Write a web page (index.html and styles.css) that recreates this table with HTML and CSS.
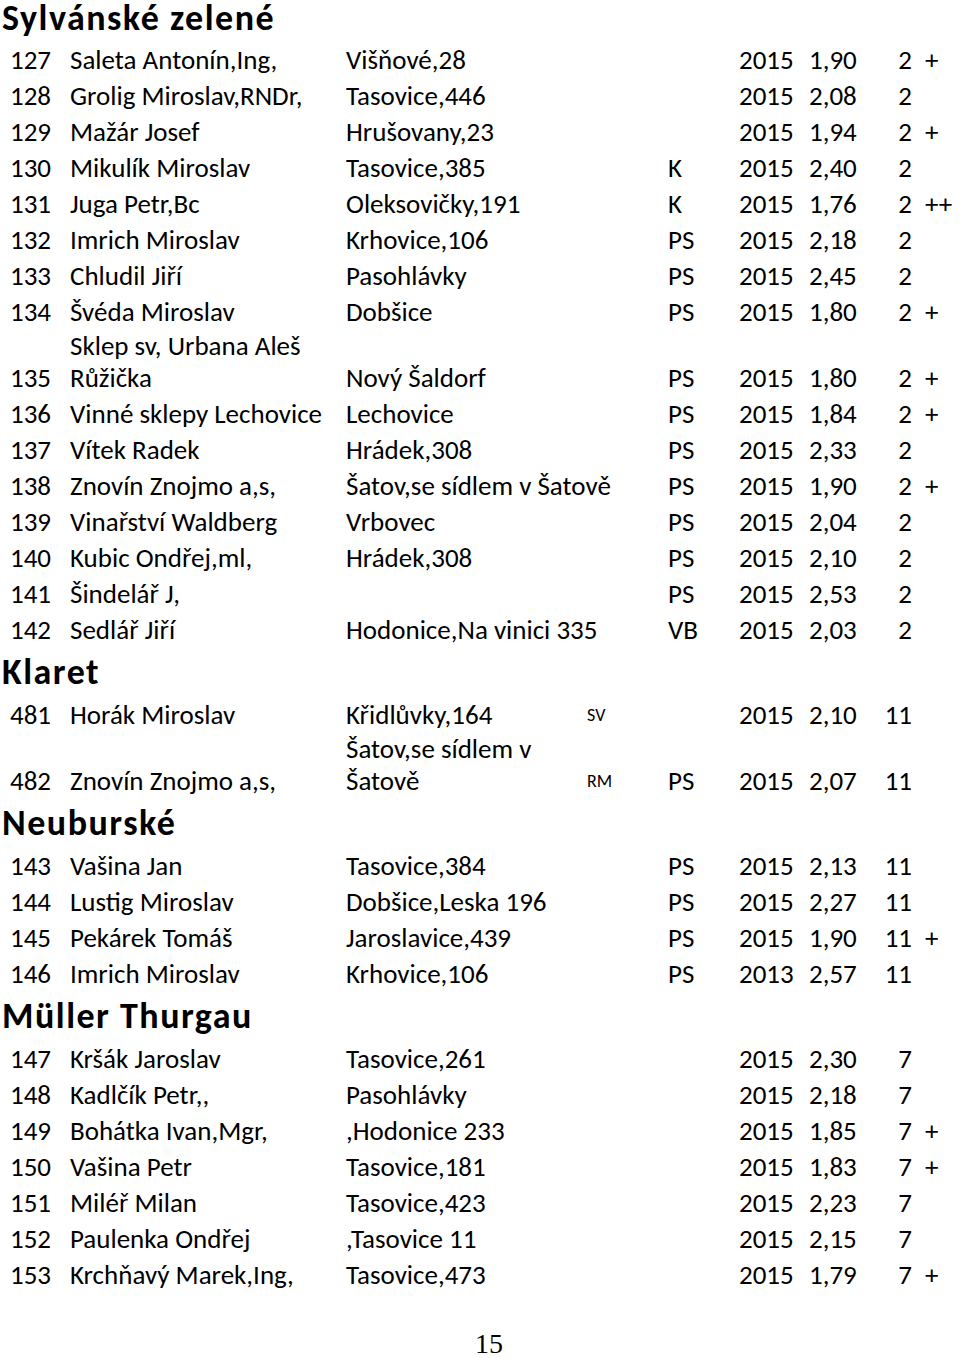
FILE: index.html
```html
<!DOCTYPE html>
<html lang="cs">
<head>
<meta charset="utf-8">
<title>Sylvánské zelené</title>
<link rel="stylesheet" href="styles.css">
</head>
<body>
<div class="page">
  <h2 class="sec first">Sylvánské zelené</h2>
  <div class="row"><span class="n">127</span><span>Saleta Antonín,Ing,</span><span>Višňové,28</span><span></span><span></span><span>2015</span><span>1,90</span><span class="c">2</span><span class="p">+</span></div>
  <div class="row"><span class="n">128</span><span>Grolig Miroslav,RNDr,</span><span>Tasovice,446</span><span></span><span></span><span>2015</span><span>2,08</span><span class="c">2</span><span class="p"></span></div>
  <div class="row"><span class="n">129</span><span>Mažár Josef</span><span>Hrušovany,23</span><span></span><span></span><span>2015</span><span>1,94</span><span class="c">2</span><span class="p">+</span></div>
  <div class="row"><span class="n">130</span><span>Mikulík Miroslav</span><span>Tasovice,385</span><span></span><span>K</span><span>2015</span><span>2,40</span><span class="c">2</span><span class="p"></span></div>
  <div class="row"><span class="n">131</span><span>Juga Petr,Bc</span><span>Oleksovičky,191</span><span></span><span>K</span><span>2015</span><span>1,76</span><span class="c">2</span><span class="p">++</span></div>
  <div class="row"><span class="n">132</span><span>Imrich Miroslav</span><span>Krhovice,106</span><span></span><span>PS</span><span>2015</span><span>2,18</span><span class="c">2</span><span class="p"></span></div>
  <div class="row"><span class="n">133</span><span>Chludil Jiří</span><span>Pasohlávky</span><span></span><span>PS</span><span>2015</span><span>2,45</span><span class="c">2</span><span class="p"></span></div>
  <div class="row"><span class="n">134</span><span>Švéda Miroslav</span><span>Dobšice</span><span></span><span>PS</span><span>2015</span><span>1,80</span><span class="c">2</span><span class="p">+</span></div>
  <div class="row"><span class="n">135</span><span>Sklep sv, Urbana Aleš<br>Růžička</span><span>Nový Šaldorf</span><span></span><span>PS</span><span>2015</span><span>1,80</span><span class="c">2</span><span class="p">+</span></div>
  <div class="row"><span class="n">136</span><span>Vinné sklepy Lechovice</span><span>Lechovice</span><span></span><span>PS</span><span>2015</span><span>1,84</span><span class="c">2</span><span class="p">+</span></div>
  <div class="row"><span class="n">137</span><span>Vítek Radek</span><span>Hrádek,308</span><span></span><span>PS</span><span>2015</span><span>2,33</span><span class="c">2</span><span class="p"></span></div>
  <div class="row"><span class="n">138</span><span>Znovín Znojmo a,s,</span><span>Šatov,se sídlem v Šatově</span><span></span><span>PS</span><span>2015</span><span>1,90</span><span class="c">2</span><span class="p">+</span></div>
  <div class="row"><span class="n">139</span><span>Vinařství Waldberg</span><span>Vrbovec</span><span></span><span>PS</span><span>2015</span><span>2,04</span><span class="c">2</span><span class="p"></span></div>
  <div class="row"><span class="n">140</span><span>Kubic Ondřej,ml,</span><span>Hrádek,308</span><span></span><span>PS</span><span>2015</span><span>2,10</span><span class="c">2</span><span class="p"></span></div>
  <div class="row"><span class="n">141</span><span>Šindelář J,</span><span></span><span></span><span>PS</span><span>2015</span><span>2,53</span><span class="c">2</span><span class="p"></span></div>
  <div class="row"><span class="n">142</span><span>Sedlář Jiří</span><span>Hodonice,Na vinici 335</span><span></span><span>VB</span><span>2015</span><span>2,03</span><span class="c">2</span><span class="p"></span></div>

  <h2 class="sec">Klaret</h2>
  <div class="row"><span class="n">481</span><span>Horák Miroslav</span><span>Křidlůvky,164</span><span class="s">SV</span><span></span><span>2015</span><span>2,10</span><span class="c">11</span><span class="p"></span></div>
  <div class="row"><span class="n">482</span><span>Znovín Znojmo a,s,</span><span>Šatov,se sídlem v<br>Šatově</span><span class="s">RM</span><span>PS</span><span>2015</span><span>2,07</span><span class="c">11</span><span class="p"></span></div>

  <h2 class="sec">Neuburské</h2>
  <div class="row"><span class="n">143</span><span>Vašina Jan</span><span>Tasovice,384</span><span></span><span>PS</span><span>2015</span><span>2,13</span><span class="c">11</span><span class="p"></span></div>
  <div class="row"><span class="n">144</span><span>Lustig Miroslav</span><span>Dobšice,Leska 196</span><span></span><span>PS</span><span>2015</span><span>2,27</span><span class="c">11</span><span class="p"></span></div>
  <div class="row"><span class="n">145</span><span>Pekárek Tomáš</span><span>Jaroslavice,439</span><span></span><span>PS</span><span>2015</span><span>1,90</span><span class="c">11</span><span class="p">+</span></div>
  <div class="row"><span class="n">146</span><span>Imrich Miroslav</span><span>Krhovice,106</span><span></span><span>PS</span><span>2013</span><span>2,57</span><span class="c">11</span><span class="p"></span></div>

  <h2 class="sec">Müller Thurgau</h2>
  <div class="row"><span class="n">147</span><span>Kršák Jaroslav</span><span>Tasovice,261</span><span></span><span></span><span>2015</span><span>2,30</span><span class="c">7</span><span class="p"></span></div>
  <div class="row"><span class="n">148</span><span>Kadlčík Petr,,</span><span>Pasohlávky</span><span></span><span></span><span>2015</span><span>2,18</span><span class="c">7</span><span class="p"></span></div>
  <div class="row"><span class="n">149</span><span>Bohátka Ivan,Mgr,</span><span>,Hodonice 233</span><span></span><span></span><span>2015</span><span>1,85</span><span class="c">7</span><span class="p">+</span></div>
  <div class="row"><span class="n">150</span><span>Vašina Petr</span><span>Tasovice,181</span><span></span><span></span><span>2015</span><span>1,83</span><span class="c">7</span><span class="p">+</span></div>
  <div class="row"><span class="n">151</span><span>Miléř Milan</span><span>Tasovice,423</span><span></span><span></span><span>2015</span><span>2,23</span><span class="c">7</span><span class="p"></span></div>
  <div class="row"><span class="n">152</span><span>Paulenka Ondřej</span><span>,Tasovice 11</span><span></span><span></span><span>2015</span><span>2,15</span><span class="c">7</span><span class="p"></span></div>
  <div class="row"><span class="n">153</span><span>Krchňavý Marek,Ing,</span><span>Tasovice,473</span><span></span><span></span><span>2015</span><span>1,79</span><span class="c">7</span><span class="p">+</span></div>

  <div class="footer">15</div>
</div>
</body>
</html>
```

FILE: styles.css
```css
html, body {
  margin: 0;
  padding: 0;
  background: #fff;
}
.page {
  width: 960px;
  color: #000;
  font-family: Carlito, Calibri, Lato, "Liberation Sans", sans-serif;
  font-size: 27px;
}
.sec {
  margin: 0;
  height: 49px;
  padding-left: 2px;
  font-size: 36px;
  font-weight: bold;
  letter-spacing: 1.5px;
  line-height: 49px;
  box-sizing: border-box;
}
.sec.first {
  height: 42px;
  line-height: 32px;
  padding-top: 2px;
}
.row {
  display: grid;
  grid-template-columns: 70px 276px 241px 81px 71px 70px 66px 37px 1fr;
  align-items: end;
  min-height: 36px;
  padding-bottom: 2px;
  box-sizing: border-box;
  line-height: 32px;
  white-space: nowrap;
}
.row .n {
  padding-left: 10px;
}
.row .c {
  text-align: right;
}
.row .p {
  padding-left: 13px;
}
.row .s {
  font-size: 18px;
}
.footer {
  margin-top: 35px;
  text-align: center;
  font-family: "Liberation Serif", serif;
  font-size: 28px;
  padding-left: 18px;
}
```
